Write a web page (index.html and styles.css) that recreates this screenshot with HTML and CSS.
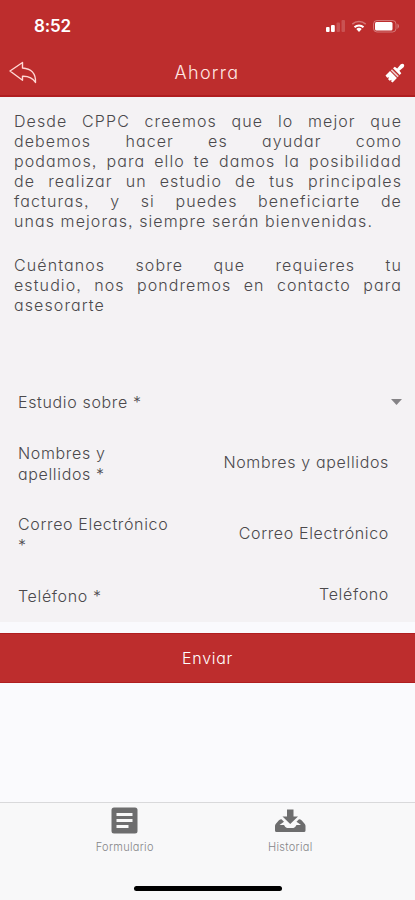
FILE: index.html
```html
<!DOCTYPE html>
<html lang="es">
<head>
    <meta charset="UTF-8">
    <meta name="viewport" content="width=device-width, initial-scale=1.0">
    <title>Ahorra</title>
    <link rel="stylesheet" href="styles.css">
</head>
<body>
    <header class="header">
        <div class="status-bar">
            <span class="time">8:52</span>
            <svg class="status-icons" width="76" height="16" viewBox="0 0 76 16">
                <g fill="#fff">
                    <rect x="1" y="9" width="3.6" height="5" rx="1"/>
                    <rect x="6" y="7" width="3.8" height="7" rx="1"/>
                    <rect x="11.5" y="4.5" width="3.5" height="9.500" rx="1" opacity=".18"/>
                    <rect x="16.500" y="2" width="3.5" height="12" rx="1" opacity=".18"/>
                    <path d="M34 14l-2.700-2.900a4 4 0 0 1 5.400 0z"/>
                </g>
                <path d="M29.500 9.200a6.500 6.500 0 0 1 9 0" fill="none" stroke="#fff" stroke-width="2"/>
                <path d="M27.300 6.100a10 10 0 0 1 13.400 0" fill="none" stroke="#fff" stroke-width="1.500" opacity=".35"/>
                <rect x="48.500" y="2.500" width="22.500" height="11.500" rx="3.500" fill="none" stroke="#fff" opacity=".35"/>
                <rect x="50" y="4" width="17.500" height="8.500" rx="1.500" fill="#fff"/>
                <path d="M72.500 5.500q3 2.700 0 5.400z" fill="#fff" opacity=".4"/>
            </svg>
        </div>
        <div class="nav-bar">
            <svg class="back" width="30" height="24" viewBox="0 0 30 24">
                <path d="M1 10L13.500 1.500v5.500c8.500.5 13.500 5.500 13 14.500-3-5-8-6.500-13-6.300v4z" fill="none" stroke="#ffd8d4" stroke-width="1.400" stroke-linejoin="round"/>
            </svg>
            <h1 class="title">Ahorra</h1>
            <svg class="brush" width="20" height="20" viewBox="0 0 20 20" fill="#fff">
                <path d="M8 5.200l1.800-1.500 2.400 1.700 3.600-4.100q1.800-1.200 3 0 1 1.300-.2 2.900l-4.200 3.600 1.900 2.500-1.600 1.700z"/>
                <path d="M7 6.200l6.800 6.800-1.200 1.200-6.800-6.800z" opacity=".75"/>
                <path d="M5 8.100l6.900 6.900-4.300 4.400-1.500-.9.500-1.800-2 1-1.500-1.500 1-2-1.900.6L.5 12.500z"/>
            </svg>
        </div>
    </header>

    <main class="content">
        <div class="intro">
            <p>
                <span class="line">Desde CPPC creemos que lo mejor que</span>
                <span class="line">debemos hacer es ayudar como</span>
                <span class="line">podamos, para ello te damos la posibilidad</span>
                <span class="line">de realizar un estudio de tus principales</span>
                <span class="line">facturas, y si puedes beneficiarte de</span>
                <span class="line last-wide">unas mejoras, siempre serán bienvenidas.</span>
            </p>
            <p>
                <span class="line">Cuéntanos sobre que requieres tu</span>
                <span class="line">estudio, nos pondremos en contacto para</span>
                <span class="line last">asesorarte</span>
            </p>
        </div>

        <div class="form">
            <div class="row select">
                <span class="label">Estudio sobre *</span>
                <svg class="caret" width="11" height="6" viewBox="0 0 11 6"><path d="M0 0h11L5.500 6z" fill="#858386"/></svg>
            </div>
            <div class="row names">
                <span class="label">Nombres y<br>apellidos *</span>
                <span class="value">Nombres y apellidos</span>
            </div>
            <div class="row email">
                <span class="label">Correo Electrónico<br>*</span>
                <span class="value">Correo Electrónico</span>
            </div>
            <div class="row phone">
                <span class="label">Teléfono *</span>
                <span class="value">Teléfono</span>
            </div>
        </div>
    </main>

    <button class="submit">Enviar</button>

    <footer class="tabs">
        <div class="tab-list">
            <div class="tab">
                <svg width="28" height="28" viewBox="0 0 28 28">
                    <rect x=".5" y=".5" width="26" height="26" rx="2.500" fill="#6d6d6e"/>
                    <path d="M5.500 7.500h16M5.500 13.500h16M5.500 19.500h12" stroke="#f8f8f8" stroke-width="3.200"/>
                </svg>
                <span>Formulario</span>
            </div>
            <div class="tab">
                <svg width="32" height="28" viewBox="0 0 32 28" fill="#6d6d6e">
                    <path d="M13 2.500h6.500v7h4.500L16.200 17 8.500 9.500H13z"/>
                    <path d="M7.500 12.300L10 14.700 5.500 18H10q1.500 3 3 3h6.500q1.500 0 3-3H27l-4.500-3.300L25 12.300q1.500 0 2.800 1.300l3 3.400q.7.800.7 2v4.500q0 1.500-1.500 1.500H2.500Q1 25 1 23.500V19q0-1.200.7-2l3-3.400q1.300-1.300 2.800-1.300z"/>
                </svg>
                <span>Historial</span>
            </div>
        </div>
        <div class="home-indicator"></div>
    </footer>
</body>
</html>
```

FILE: styles.css
```css
* {
    box-sizing: border-box;
}
body {
    margin: 0;
    height: 900px;
    display: flex;
    flex-direction: column;
    background: #fafafd;
    color: #4b494c;
    font-family: Inter, "Open Sans", sans-serif;
    font-weight: 300;
    font-size: 16px;
    /* single-storey a */
    font-feature-settings: "cv11", "ss03";
}
.header {
    height: 97px;
    background: #bd2d2d;
    border-bottom: 2px solid #b01e20;
    color: #fff;
}
.status-bar {
    height: 48px;
    padding: 18px 14px 0 34px;
    display: flex;
    justify-content: space-between;
}
.time {
    font-size: 17px;
    line-height: 17px;
    font-weight: 600;
    letter-spacing: -0.2px;
}
.nav-bar {
    height: 49px;
    padding: 0 10px 0 9px;
    display: grid;
    grid-template-columns: 30px 1fr 30px;
    align-items: center;
}
.title {
    margin: 0;
    text-align: center;
    font-size: 18px;
    font-weight: 300;
    letter-spacing: 1.3px;
    color: #ffe6e3;
}
.brush {
    justify-self: end;
}
.content {
    height: 525px;
    background: #f4f2f4;
}
.intro {
    height: 279px;
    padding: 14px 13px 0 14px;
    line-height: 20px;
}
.intro p {
    margin: 0 0 24px;
}
.line {
    display: block;
    white-space: nowrap;
    text-align: justify;
    text-align-last: justify;
    letter-spacing: 1.1px;
    word-spacing: -2px;
}
.last-wide {
    width: 359px;
}
.last {
    text-align-last: left;
}
.form {
    padding: 0 26px 0 18px;
    line-height: 21px;
    letter-spacing: 0.65px;
}
.row {
    display: flex;
    justify-content: space-between;
    align-items: center;
}
.value {
    padding-bottom: 3px;
}
.select {
    height: 52px;
    margin-right: -13px;
}
.names {
    height: 71px;
}
.email {
    height: 71px;
}
.phone {
    height: 52px;
}
.submit {
    height: 50px;
    margin-top: 11px;
    border: solid #b01e20;
    border-width: 1px 0;
    background: #bd2d2d;
    color: #fff;
    font: inherit;
    letter-spacing: 0.7px;
}
.tabs {
    height: 98px;
    margin-top: auto;
    border-top: 1px solid #d9d9db;
    background: #f8f8f9;
}
.tab-list {
    height: 85px;
    padding: 4px 42px 0;
    display: grid;
    grid-template-columns: 1fr 1fr;
}
.tab {
    display: flex;
    flex-direction: column;
    align-items: center;
    gap: 5px;
    font-size: 11px;
    line-height: 14px;
    letter-spacing: 0.3px;
    color: #858588;
}
.home-indicator {
    width: 148px;
    height: 5px;
    margin: -2px auto 0;
    border-radius: 3px;
    background: #000;
}
```
